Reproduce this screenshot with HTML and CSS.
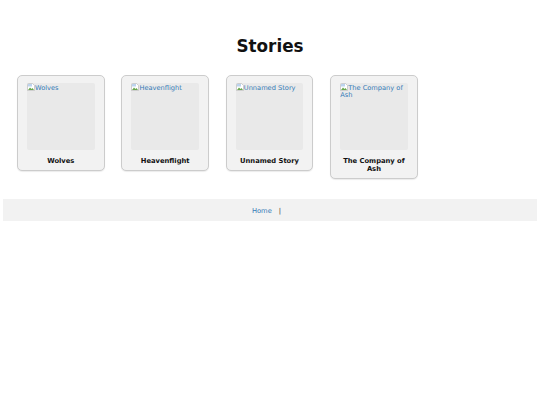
FILE: index.html
```html
<!DOCTYPE html>
<html lang="en">
<head>
    <meta charset="UTF-8">
    <meta name="viewport" content="width=device-width, initial-scale=1.0">
    <title>Stories</title>
    <link rel="stylesheet" href="styles.css">
</head>
<body>

<h1 class="page-heading">Stories</h1>

<div class="story-list">
    <a class="story-card" href="#">
        <span class="story-cover">
            <svg class="broken-icon" viewBox="0 0 16 16"><path d="M1 1h10l4 4v10H1z" fill="#fff" stroke="#a9a9a9"/><path d="M2 14l4-5 3 3 2-2 3 4z" fill="#6aa84f"/><path d="M2 2h8v5H2z" fill="#bcd3ee"/></svg>Wolves
        </span>
        <span class="story-title">Wolves</span>
    </a>
    <a class="story-card" href="#">
        <span class="story-cover">
            <svg class="broken-icon" viewBox="0 0 16 16"><path d="M1 1h10l4 4v10H1z" fill="#fff" stroke="#a9a9a9"/><path d="M2 14l4-5 3 3 2-2 3 4z" fill="#6aa84f"/><path d="M2 2h8v5H2z" fill="#bcd3ee"/></svg>Heavenflight
        </span>
        <span class="story-title">Heavenflight</span>
    </a>
    <a class="story-card" href="#">
        <span class="story-cover">
            <svg class="broken-icon" viewBox="0 0 16 16"><path d="M1 1h10l4 4v10H1z" fill="#fff" stroke="#a9a9a9"/><path d="M2 14l4-5 3 3 2-2 3 4z" fill="#6aa84f"/><path d="M2 2h8v5H2z" fill="#bcd3ee"/></svg>Unnamed Story
        </span>
        <span class="story-title">Unnamed Story</span>
    </a>
    <a class="story-card" href="#">
        <span class="story-cover">
            <svg class="broken-icon" viewBox="0 0 16 16"><path d="M1 1h10l4 4v10H1z" fill="#fff" stroke="#a9a9a9"/><path d="M2 14l4-5 3 3 2-2 3 4z" fill="#6aa84f"/><path d="M2 2h8v5H2z" fill="#bcd3ee"/></svg>The Company of Ash
        </span>
        <span class="story-title">The Company of Ash</span>
    </a>
</div>

<div class="site-footer">
    <a href="#">Home</a>
    <span class="footer-sep">|</span>
</div>

</body>
</html>
```

FILE: styles.css
```css
body {
    font-family: "DejaVu Sans", sans-serif;
    font-size: 6.75px;
    line-height: 8px;
    background-color: #fff;
    color: #111;
    margin: 0;
    padding: 0 3px;
}

.page-heading {
    font-size: 16.8px;
    line-height: 22px;
    text-align: center;
    margin: 0;
    padding-top: 35px;
    color: #111;
}

.story-list {
    display: flex;
    align-items: flex-start;
    gap: 16.9px;
    padding: 18.4px 14px 0;
}

.story-card {
    display: block;
    box-sizing: border-box;
    width: 87.5px;
    padding: 6.4px 9px 5px;
    background-color: #f2f2f2;
    border: 1px solid #ccc;
    border-radius: 5px;
    box-shadow: 0 1px 1px rgba(0, 0, 0, 0.08);
    text-decoration: none;
}

.story-cover {
    display: block;
    height: 67.5px;
    background-color: #e9e9e9;
    border-radius: 2px;
    color: #337ab7;
    font-size: 6.65px;
    overflow: hidden;
}

.broken-icon {
    width: 8px;
    height: 8px;
    vertical-align: -1.5px;
}

.story-title {
    display: block;
    margin-top: 7px;
    font-weight: bold;
    text-align: center;
    color: #111;
}

.site-footer {
    display: flex;
    justify-content: center;
    gap: 7px;
    margin-top: 20px;
    padding: 7.5px 7px 6.5px 0;
    height: 8px;
    background-color: #f2f2f2;
}

.site-footer a {
    color: #337ab7;
    text-decoration: none;
}

.footer-sep {
    color: #333;
}
```
